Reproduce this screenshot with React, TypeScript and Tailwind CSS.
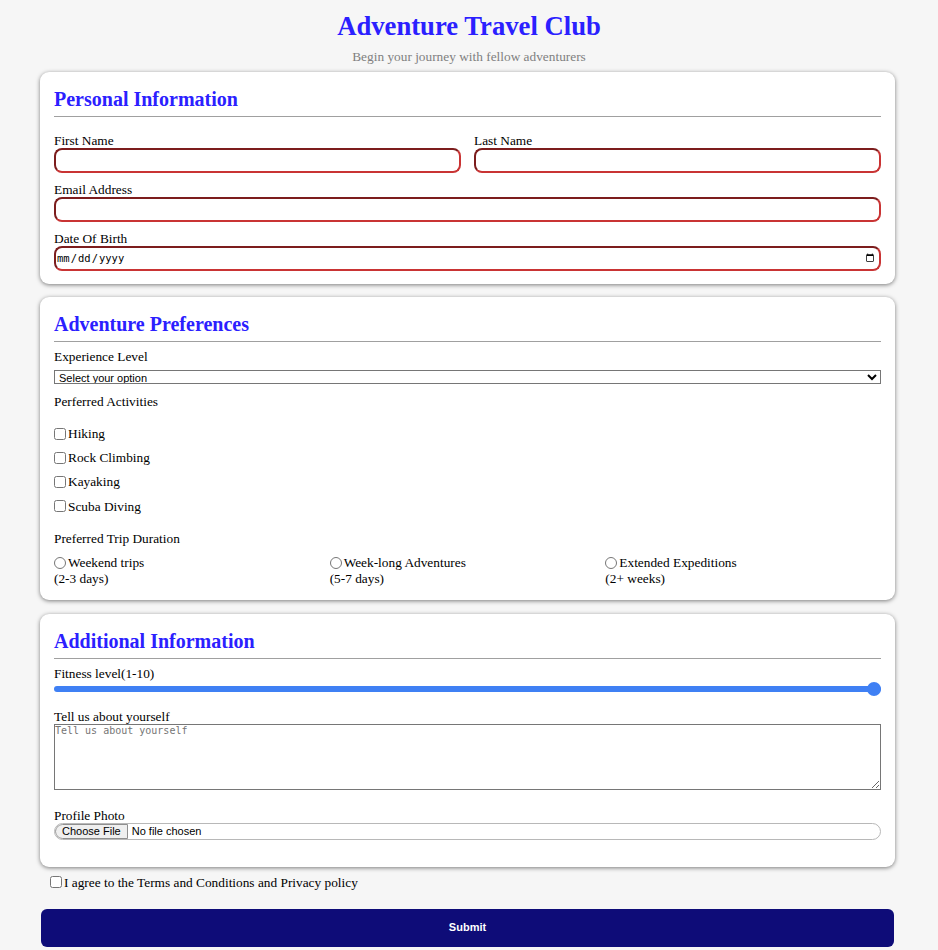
import React from "react";

// Adventure Travel Club – sign-up form

const redInput =
  "block h-[25px] w-full rounded-[8px] border-2 border-t-[#7c1d1d] border-l-[#7c1d1d] border-r-[#c93434] border-b-[#c93434] bg-white outline-none";

const ACTIVITIES = ["Hiking", "Rock Climbing", "Kayaking", "Scuba Diving"];

const DURATIONS = [
  { label: "Weekend trips", sub: "(2-3 days)" },
  { label: "Week-long Adventures", sub: "(5-7 days)" },
  { label: "Extended Expeditions", sub: "(2+ weeks)" },
];

function Card({
  title,
  className = "",
  children,
}: {
  title: string;
  className?: string;
  children: React.ReactNode;
}) {
  return (
    <section
      className={`rounded-[9px] bg-white px-[14px] pt-[16px] shadow-[0_1px_4px_rgba(0,0,0,0.5)] ${className}`}
    >
      <h2 className="border-b border-[#a0a0a0] pb-[5px] text-[20px] leading-[23px] font-bold text-[#2b20ff]">
        {title}
      </h2>
      {children}
    </section>
  );
}

export default function App() {
  return (
    <div className="min-h-screen bg-[#f6f6f6] pb-[3px] font-['Liberation_Serif',serif] text-[13.33px] leading-[15px] text-black">
      <header className="pt-[11px] text-center">
        <h1 className="text-[26.67px] leading-[30px] font-bold text-[#2b20ff]">Adventure Travel Club</h1>
        <p className="mt-[8px] text-[#808080]">Begin your journey with fellow adventurers</p>
      </header>

      <form className="ml-[40px] mt-[8px] w-[855px]" onSubmit={(e) => e.preventDefault()}>
        <Card title="Personal Information" className="mb-[13px] pb-[13px]">
          <div className="mt-[16px] grid grid-cols-2 gap-x-[13px]">
            <div>
              <label className="block">First Name</label>
              <input type="text" className={redInput} />
            </div>
            <div>
              <label className="block">Last Name</label>
              <input type="text" className={redInput} />
            </div>
          </div>
          <div className="mt-[9px]">
            <label className="block">Email Address</label>
            <input type="email" className={redInput} />
          </div>
          <div className="mt-[9px]">
            <label className="block">Date Of Birth</label>
            <input
              type="date"
              className={`${redInput} pr-[2px] font-['DejaVu_Sans_Mono',monospace] text-[10.5px]`}
            />
          </div>
        </Card>

        <Card title="Adventure Preferences" className="mb-[14px] pb-[14px]">
          <label className="mt-[7px] block">Experience Level</label>
          <select className="mt-[6px] block h-[14px] w-full border border-[#767676] bg-white font-['Liberation_Sans',Arial,sans-serif] text-[11px] leading-[12px]">
            <option>Select your option</option>
            <option>Beginner</option>
            <option>Intermediate</option>
            <option>Advanced</option>
          </select>

          <p className="mt-[10px]">Perferred Activities</p>
          <div className="mt-[17px] flex flex-col gap-[9.2px]">
            {ACTIVITIES.map((a) => (
              <label key={a} className="flex h-[15px] items-center">
                <input type="checkbox" className="m-0 mr-[2px] h-[12px] w-[12px] accent-[#767676]" />
                <span>{a}</span>
              </label>
            ))}
          </div>

          <p className="mt-[17px]">Preferred Trip Duration</p>
          <div className="mt-[9px] grid grid-cols-3">
            {DURATIONS.map((d) => (
              <label key={d.label} className="block">
                <span className="flex h-[16px] items-center">
                  <input type="radio" name="duration" className="m-0 mr-[2px] h-[12px] w-[12px] accent-[#767676]" />
                  <span>{d.label}</span>
                </span>
                <span className="block">{d.sub}</span>
              </label>
            ))}
          </div>
        </Card>

        <Card title="Additional Information" className="mb-[8px] pb-[27px]">
          <label className="mt-[7px] block">Fitness level(1-10)</label>
          <input
            type="range"
            min={1}
            max={10}
            defaultValue={10}
            className="mt-[5px] block h-[6px] w-full appearance-none rounded-full bg-[#3f80f4] [&::-webkit-slider-thumb]:h-[14px] [&::-webkit-slider-thumb]:w-[14px] [&::-webkit-slider-thumb]:appearance-none [&::-webkit-slider-thumb]:rounded-full [&::-webkit-slider-thumb]:bg-[#3f80f4]"
          />

          <label className="mt-[17px] block">Tell us about yourself</label>
          <textarea
            placeholder="Tell us about yourself"
            className="block h-[66px] w-full resize-y border border-[#767676] bg-white font-['DejaVu_Sans_Mono',monospace] text-[10px] leading-[12px] placeholder:text-[#757575]"
          />

          <label className="mt-[18px] block">Profile Photo</label>
          <input
            type="file"
            className="block h-[17px] w-full overflow-hidden rounded-full border border-[#b8b8b8] font-['Liberation_Sans',Arial,sans-serif] text-[11px] leading-[13px] file:mr-[4px] file:h-full file:rounded-l-full file:border file:border-[#8f8f8f] file:bg-[#efefef] file:px-[6px] file:text-black"
          />
        </Card>

        <label className="flex h-[15px] items-center pl-[10px]">
          <input type="checkbox" className="m-0 mr-[2px] h-[12px] w-[12px] accent-[#767676]" />
          <span>I agree to the Terms and Conditions and Privacy policy</span>
        </label>

        <button
          type="submit"
          className="ml-[1px] mt-[19px] block h-[38px] w-[853px] rounded-[6px] bg-[#0e0c78] font-['Liberation_Sans',Arial,sans-serif] text-[11px] font-bold text-white"
        >
          Submit
        </button>
      </form>
    </div>
  );
}
